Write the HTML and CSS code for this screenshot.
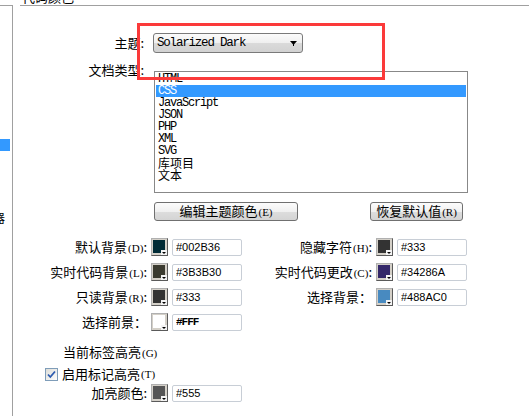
FILE: index.html
```html
<!DOCTYPE html>
<html lang="zh-CN">
<head>
    <meta charset="UTF-8">
    <meta name="viewport" content="width=device-width, initial-scale=1.0">
    <title>代码颜色</title>
    <link rel="stylesheet" href="styles.css">
</head>
<body>
    <div class="window">
        <div class="sidebar">
            <div class="side-sel"></div>
            <div class="side-char">器</div>
        </div>

        <div class="panel">
            <div class="panel-title"><span>代码颜色</span></div>
            <div class="panel-body">
                <div class="form-row theme-row">
                    <label class="lbl">主题:</label>
                    <div class="select">
                        <span class="select-text">Solarized Dark</span>
                        <svg class="select-arrow" width="7" height="5" viewBox="0 0 7 5"><path d="M0 0h7L3.5 4z" fill="#000"/><rect x="3" y="3" width="1" height="2" fill="#000"/></svg>
                    </div>
                </div>

                <div class="form-row doc-row">
                    <label class="lbl lbl-top">文档类型:</label>
                    <div class="listbox">
                        <div class="item">HTML</div>
                        <div class="item selected">CSS</div>
                        <div class="item">JavaScript</div>
                        <div class="item">JSON</div>
                        <div class="item">PHP</div>
                        <div class="item">XML</div>
                        <div class="item">SVG</div>
                        <div class="item cjk">库项目</div>
                        <div class="item cjk">文本</div>
                    </div>
                </div>

                <div class="btn-row">
                    <button class="btn btn-edit">编辑主题颜色<span class="key">(E)</span></button>
                    <button class="btn btn-reset">恢复默认值<span class="key">(R)</span></button>
                </div>

                <div class="color-grid">
                    <label class="clbl">默认背景<span class="key">(D)</span>:</label>
                    <div class="swatch"><div class="chip" style="background:#002B36"></div><span class="drop"></span></div>
                    <input class="hex" type="text" value="#002B36">

                    <label class="clbl">隐藏字符<span class="key">(H)</span>:</label>
                    <div class="swatch"><div class="chip" style="background:#333"></div><span class="drop"></span></div>
                    <input class="hex" type="text" value="#333">

                    <label class="clbl">实时代码背景<span class="key">(L)</span>:</label>
                    <div class="swatch"><div class="chip" style="background:#3B3B30"></div><span class="drop"></span></div>
                    <input class="hex" type="text" value="#3B3B30">

                    <label class="clbl">实时代码更改<span class="key">(C)</span>:</label>
                    <div class="swatch"><div class="chip" style="background:#34286A"></div><span class="drop"></span></div>
                    <input class="hex" type="text" value="#34286A">

                    <label class="clbl">只读背景<span class="key">(R)</span>:</label>
                    <div class="swatch"><div class="chip" style="background:#333"></div><span class="drop"></span></div>
                    <input class="hex" type="text" value="#333">

                    <label class="clbl">选择背景：</label>
                    <div class="swatch"><div class="chip" style="background:#488AC0"></div><span class="drop"></span></div>
                    <input class="hex" type="text" value="#488AC0">

                    <label class="clbl">选择前景：</label>
                    <div class="swatch"><div class="chip" style="background:#FFF"></div><span class="drop"></span></div>
                    <input class="hex hex-serif" type="text" value="#FFF">
                </div>

                <div class="tag-title">当前标签高亮<span class="key">(G)</span></div>

                <label class="check-row">
                    <svg class="check" width="13" height="13" viewBox="0 0 13 13">
                        <defs>
                            <linearGradient id="cbg" x1="0" y1="0" x2="1" y2="1">
                                <stop offset="0" stop-color="#dcdcd7"/>
                                <stop offset="1" stop-color="#ffffff"/>
                            </linearGradient>
                        </defs>
                        <rect x="0.5" y="0.5" width="12" height="12" fill="url(#cbg)" stroke="#7f9db9"/>
                        <path d="M3 6.5l2.3 2.5L10 3.5" fill="none" stroke="#2c5bb0" stroke-width="1.8"/>
                    </svg>
                    启用标记高亮<span class="key">(T)</span>
                </label>

                <div class="color-grid single">
                    <label class="clbl">加亮颜色:</label>
                    <div class="swatch"><div class="chip" style="background:#555"></div><span class="drop"></span></div>
                    <input class="hex" type="text" value="#555">
                </div>
            </div>
        </div>
    </div>

    <div class="annot"></div>
</body>
</html>
```

FILE: styles.css
```css
body {
    font-family: "Noto Sans CJK SC", "Liberation Sans", sans-serif;
    font-size: 12px;
    color: #000;
    margin: 0;
    padding: 0;
    background: #fff;
    position: relative;
    overflow: hidden;
}
.window {
    display: flex;
    height: 100vh;
}
.sidebar {
    width: 12px;
    margin-top: 5px;
    border-top: 1px solid #a0a0a0;
    border-right: 1px solid #a0a0a0;
    overflow: hidden;
    flex-shrink: 0;
}
.side-sel {
    width: 10px;
    height: 12px;
    margin-top: 133px;
    background: #3399ff;
}
.side-char {
    margin-top: 60px;
    margin-left: -7px;
    line-height: 14px;
    white-space: nowrap;
}
.panel {
    flex: 1;
    margin-left: 7px;
}
.panel-title {
    height: 5px;
    overflow: hidden;
}
.panel-title span {
    display: block;
    margin-top: -9px;
    padding-left: 2px;
    line-height: 12px;
    font-size: 13px;
}
.panel-body {
    border-top: 1px solid #a0a0a0;
    padding-top: 27px;
}
.form-row {
    display: flex;
    align-items: center;
}
.lbl {
    width: 124px;
    text-align: right;
    line-height: 14px;
    font-size: 13px;
}
.select {
    margin-left: 9px;
    height: 18px;
    border: 1px solid #7a7a7a;
    border-radius: 3px;
    background: linear-gradient(#fbfbfb, #efefef 50%, #dadada 52%, #d2d2d2);
    display: flex;
    align-items: center;
    justify-content: space-between;
    padding: 0 5px 0 3px;
    width: 140px;
}
.select-text,
.item {
    font-family: "Liberation Mono", monospace;
    font-size: 12px;
    letter-spacing: -1.2px;
}
.select-text {
    font-size: 12.5px;
}
.doc-row {
    margin-top: 18px;
    align-items: flex-start;
}
.lbl-top {
    margin-top: -8px;
}
.listbox {
    margin-left: 10px;
    width: 310px;
    height: 118px;
    border: 1px solid #888;
    padding: 1px;
    overflow: hidden;
}
.item {
    height: 12px;
    line-height: 12px;
    padding-left: 2px;
    white-space: nowrap;
}
.item.cjk {
    font-family: "Noto Sans CJK SC", sans-serif;
    font-size: 12px;
    letter-spacing: 0;
}
.item.selected {
    background: #3399ff;
    color: #fff;
}
.btn-row {
    display: flex;
    margin-top: 9px;
    padding-left: 134px;
}
.btn {
    height: 19px;
    padding: 0;
    border: 1px solid #707070;
    border-radius: 3px;
    background: linear-gradient(#fcfcfc, #f0f0f0 50%, #dddddd 52%, #d4d4d4);
    font-family: "Noto Sans CJK SC", sans-serif;
    font-size: 13px;
    line-height: 16px;
    color: #000;
}
.btn-edit {
    width: 144px;
}
.btn-reset {
    width: 93px;
    margin-left: 72px;
}
.key {
    font-family: "Liberation Serif", serif;
    font-size: 11px;
    margin-left: 1px;
}
.color-grid {
    display: grid;
    grid-template-columns: 127px 17px 70px 126px 17px 70px;
    grid-auto-rows: 18px;
    column-gap: 4px;
    row-gap: 7px;
    margin-top: 17px;
    align-items: center;
}
.color-grid.single {
    margin-top: 3px;
}
.clbl {
    text-align: right;
    line-height: 14px;
    font-size: 13px;
    white-space: nowrap;
}
.swatch {
    position: relative;
    width: 15px;
    height: 16px;
    border: 1px solid;
    border-color: #b0b0b0 #5a5a5a #5a5a5a #b0b0b0;
    background: #d4d0c8;
}
.chip {
    position: absolute;
    left: 1px;
    top: 1px;
    width: 12px;
    height: 13px;
}
.drop {
    position: absolute;
    right: 0;
    bottom: 0;
    width: 6px;
    height: 5px;
    background: #f4f4f4;
}
.drop::after {
    content: "";
    position: absolute;
    left: 1px;
    top: 2px;
    border-left: 2px solid transparent;
    border-right: 2px solid transparent;
    border-top: 2px solid #000;
}
.hex {
    width: 70px;
    height: 17px;
    box-sizing: border-box;
    border: 1px solid #c8ced6;
    border-radius: 2px;
    padding: 0 0 0 3px;
    font-family: "Liberation Sans", sans-serif;
    font-size: 11px;
    color: #000;
    outline: none;
}
.hex-serif {
    font-family: "Liberation Mono", monospace;
    font-weight: bold;
    letter-spacing: -1px;
}
.tag-title {
    margin-top: 14px;
    padding-left: 43px;
    line-height: 14px;
    font-size: 13px;
}
.check-row {
    display: flex;
    align-items: center;
    margin-top: 7px;
    padding-left: 25px;
    height: 14px;
    line-height: 14px;
    font-size: 13px;
}
.check {
    margin-right: 4px;
}
.annot {
    position: absolute;
    left: 137px;
    top: 23px;
    width: 242px;
    height: 51px;
    border: 3px solid #fb3a3a;
}
```
